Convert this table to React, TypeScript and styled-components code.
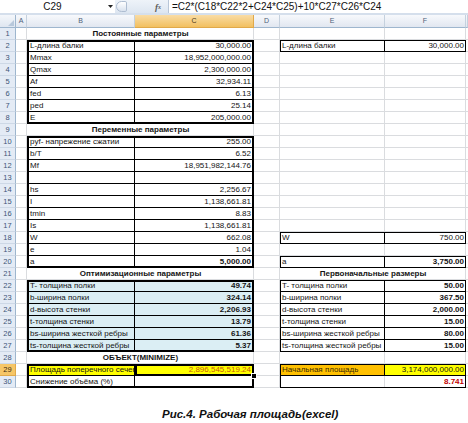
import React from 'react';
import styled, { createGlobalStyle } from 'styled-components';

const GlobalStyle = createGlobalStyle`
  html, body { margin: 0; padding: 0; background: #ffffff; }
  body { font-family: "Liberation Sans", Arial, sans-serif; }
`;

const Page = styled.div`
  width: 468px;
  height: 423px;
  overflow: hidden;
  background: #ffffff;
  display: flex;
  flex-direction: column;
`;

/* ---------- formula bar ---------- */
const FormulaBar = styled.div`
  display: flex;
  align-items: stretch;
  height: 15px;
  box-sizing: border-box;
  background: linear-gradient(#eef3f9, #dde6f1);
  border-bottom: 2px solid #d5dfec;
`;

const NameBox = styled.div`
  width: 105px;
  background: #ffffff;
  display: flex;
  align-items: center;
  justify-content: center;
  font-size: 10px;
  color: #111;
`;

const ArrowBox = styled.div`
  width: 10px;
  background: #ffffff;
  display: flex;
  align-items: center;
  justify-content: center;
`;

const Handle = styled.div`
  width: 11px;
  margin: 1px 0 1px 1px;
  box-sizing: border-box;
  border: 1px solid #aebdd1;
  border-radius: 6px 2px 2px 6px;
  background: linear-gradient(#ffffff, #d9e2ee);
`;

const FxBox = styled.div`
  width: 41px;
  display: flex;
  align-items: center;
  justify-content: flex-end;
  padding-right: 7px;
  box-sizing: border-box;
  font-family: "Liberation Serif", serif;
  font-style: italic;
  font-weight: bold;
  font-size: 9px;
  color: #5a5a5a;
  sub { font-size: 6px; vertical-align: -1px; }
`;

const FormulaInput = styled.div`
  flex: 1;
  background: #ffffff;
  border-left: 1px solid #b8c6d8;
  padding-left: 3px;
  font-size: 10px;
  line-height: 13px;
  color: #111;
  white-space: nowrap;
  overflow: hidden;
`;

/* ---------- sheet grid ---------- */
const Sheet = styled.div`
  display: grid;
  grid-template-columns: 16px 11px 108px 119px 26px 105px 81px 2px;
  grid-template-rows: 13px repeat(30, 12px);
`;

const Corner = styled.div`
  position: relative;
  box-sizing: border-box;
  background: linear-gradient(#f4f7fb, #dfe6f0);
  border-right: 1px solid #9eb6ce;
  border-bottom: 1px solid #9eb6ce;
  &::after {
    content: '';
    position: absolute;
    right: 1px;
    bottom: 1px;
    border-left: 6px solid transparent;
    border-bottom: 6px solid #b8c8db;
  }
`;

const ColHead = styled.div<{ $active?: boolean }>`
  box-sizing: border-box;
  background: ${p => (p.$active ? 'linear-gradient(#f9dca5, #f2c060)' : 'linear-gradient(#f7f9fc, #e1e7f0)')};
  border-right: 1px solid ${p => (p.$active ? '#e0a94a' : '#c5d1de')};
  border-bottom: 1px solid ${p => (p.$active ? '#e0a94a' : '#9eb6ce')};
  font-size: 7px;
  line-height: 12px;
  text-align: center;
  color: ${p => (p.$active ? '#4a3a1a' : '#4f6078')};
`;

const RowHead = styled.div<{ $active?: boolean }>`
  box-sizing: border-box;
  background: ${p => (p.$active ? '#f6c667' : '#e4ebf5')};
  border-right: 1px solid ${p => (p.$active ? '#e0a94a' : '#9eb6ce')};
  border-bottom: 1px solid ${p => (p.$active ? '#e0a94a' : '#cdd8e6')};
  font-size: 7.5px;
  line-height: 11px;
  text-align: center;
  color: ${p => (p.$active ? '#3a2a10' : '#3d5578')};
`;

type CellProps = {
  $span: number;
  $align: 'left' | 'right' | 'center';
  $bold?: boolean;
  $fill?: string;
  $color?: string;
  $t?: number;
  $r?: number;
  $b?: number;
  $l?: number;
  $active?: boolean;
};

const GRID = '#dadcdf';

const shadowOf = (p: CellProps) => {
  const s: string[] = [];
  if (p.$t) s.push(`inset 0 ${p.$t}px 0 #000`);
  s.push(p.$b ? `inset 0 -${p.$b}px 0 #000` : `inset 0 -1px 0 ${GRID}`);
  if (p.$l) s.push(`inset ${p.$l}px 0 0 #000`);
  s.push(p.$r ? `inset -${p.$r}px 0 0 #000` : `inset -1px 0 0 ${GRID}`);
  return s.join(', ');
};

const Cell = styled.div<CellProps>`
  position: relative;
  z-index: ${p => (p.$active ? 3 : 1)};
  grid-column: span ${p => p.$span};
  box-sizing: border-box;
  padding: 0 ${p => (p.$r && p.$r > 1 ? 3 : 2)}px 0 ${p => (p.$l && p.$l > 1 ? 3 : 2)}px;
  font-size: 8px;
  line-height: 12px;
  white-space: nowrap;
  overflow: ${p => (p.$active ? 'visible' : 'hidden')};
  text-align: ${p => p.$align};
  font-weight: ${p => (p.$bold ? 'bold' : 'normal')};
  background: ${p => p.$fill ?? 'transparent'};
  color: ${p => p.$color ?? '#141414'};
  box-shadow: ${p => shadowOf(p)};
`;

const FillHandle = styled.span`
  position: absolute;
  right: -3px;
  bottom: -3px;
  width: 4px;
  height: 4px;
  background: #000;
  border: 1px solid #fff;
`;

const Caption = styled.div`
  margin-top: 19px;
  padding-left: 162px;
  font-family: "Liberation Sans", Arial, sans-serif;
  font-style: italic;
  font-weight: bold;
  font-size: 11.5px;
  line-height: 14px;
  color: #111;
`;

/* ---------- data ---------- */
type Spec = {
  x?: string;
  s?: number;
  a?: 'left' | 'right' | 'center';
  w?: boolean;
  f?: string;
  c?: string;
  t?: number;
  r?: number;
  b?: number;
  l?: number;
  active?: boolean;
};
type RowSpec = Record<number, Spec>;

const BLUE = '#dbeef4';

const bc = (label: string, value: string, o: { first?: boolean; last?: boolean; bold?: boolean; fill?: string } = {}): RowSpec => {
  const t = o.first ? 2 : 0;
  const b = o.last ? 2 : 1;
  return {
    1: { x: label, a: 'left', l: 2, r: 1, t, b, f: o.fill },
    2: { x: value, a: 'right', r: 2, t, b, w: o.bold, f: o.fill },
  };
};

const ef = (label: string, value: string, o: { first?: boolean; bold?: boolean } = {}): RowSpec => {
  const t = o.first ? 1 : 0;
  return {
    4: { x: label, a: 'left', l: 1, r: 1, t, b: 1 },
    5: { x: value, a: 'right', r: 1, t, b: 1, w: o.bold },
  };
};

const title = (col: number, text: string): RowSpec => ({ [col]: { x: text, s: 2, a: 'center', w: true } });

const rows: RowSpec[] = [
  { ...title(1, 'Постоянные параметры') },
  { ...bc('L-длина балки', '30,000.00', { first: true }), ...ef('L-длина балки', '30,000.00', { first: true }) },
  bc('Mmax', '18,952,000,000.00'),
  bc('Qmax', '2,300,000.00'),
  bc('Af', '32,934.11'),
  bc('fed', '6.13'),
  bc('ped', '25.14'),
  bc('E', '205,000.00', { last: true }),
  { ...title(1, 'Переменные параметры') },
  bc('pyf- напрежение сжатии', '255.00', { first: true }),
  bc('b/T', '6.52'),
  bc('Mf', '18,951,982,144.76'),
  bc('', ''),
  bc('hs', '2,256.67'),
  bc('I', '1,138,661.81'),
  bc('tmin', '8.83'),
  bc('Is', '1,138,661.81'),
  { ...bc('W', '662.08'), ...ef('W', '750.00', { first: true }) },
  bc('e', '1.04'),
  { ...bc('a', '5,000.00', { last: true, bold: true }), ...ef('a', '3,750.00', { first: true, bold: true }) },
  { ...title(1, 'Оптимизационные параметры'), ...title(4, 'Первоначальные размеры') },
  { ...bc('T- толщина полки', '49.74', { first: true, bold: true, fill: BLUE }), ...ef('T- толщина полки', '50.00', { first: true, bold: true }) },
  { ...bc('b-ширина полки', '324.14', { bold: true, fill: BLUE }), ...ef('b-ширина полки', '367.50', { bold: true }) },
  { ...bc('d-высота стенки', '2,206.93', { bold: true, fill: BLUE }), ...ef('d-высота стенки', '2,000.00', { bold: true }) },
  { ...bc('t-толщина стенки', '13.79', { bold: true, fill: BLUE }), ...ef('t-толщина стенки', '15.00', { bold: true }) },
  { ...bc('bs-ширина жесткой ребры', '61.36', { bold: true, fill: BLUE }), ...ef('bs-ширина жесткой ребры', '80.00', { bold: true }) },
  { ...bc('ts-толщина жесткой ребры', '5.37', { last: true, bold: true, fill: BLUE }), ...ef('ts-толщина жесткой ребры', '15.00', { bold: true }) },
  { ...title(1, 'ОБЪЕКТ(MINIMIZE)') },
  {
    1: { x: 'Площадь поперечного сечения', a: 'left', f: '#ffff00', l: 2, t: 2, r: 1, b: 1 },
    2: { x: '2,896,545,519.24', a: 'right', f: '#ffff00', c: '#c8590c', t: 2, r: 2, b: 2, l: 2, active: true },
    4: { x: 'Начальная площадь', a: 'left', f: '#ffc000', c: '#3a2a00', t: 1, l: 1, r: 1, b: 1 },
    5: { x: '3,174,000,000.00', a: 'right', f: '#ffff00', t: 1, r: 1, b: 1 },
  },
  {
    1: { x: 'Снижение объёма (%)', a: 'left', l: 2, b: 2, r: 1 },
    2: { r: 2, b: 2 },
    4: { l: 1, b: 1 },
    5: { x: '8.741', a: 'right', w: true, c: '#c00000', r: 1, b: 1 },
  },
];

const COLS = ['A', 'B', 'C', 'D', 'E', 'F', ''];

const renderRow = (spec: RowSpec, i: number) => {
  const out: React.ReactNode[] = [];
  const n = i + 1;
  out.push(
    <RowHead key={`h${n}`} $active={n === 29}>
      {n}
    </RowHead>
  );
  let col = 0;
  while (col < COLS.length) {
    const c = spec[col] ?? {};
    const span = c.s ?? 1;
    out.push(
      <Cell
        key={`c${n}-${col}`}
        $span={span}
        $align={c.a ?? 'left'}
        $bold={c.w}
        $fill={c.f}
        $color={c.c}
        $t={c.t}
        $r={c.r}
        $b={c.b}
        $l={c.l}
        $active={c.active}
      >
        {c.x}
        {c.active && <FillHandle />}
      </Cell>
    );
    col += span;
  }
  return out;
};

export default function App() {
  return (
    <Page>
      <GlobalStyle />
      <FormulaBar>
        <NameBox>C29</NameBox>
        <ArrowBox>
          <svg width="5" height="3" viewBox="0 0 5 3">
            <path d="M0 0 H5 L2.5 3 Z" fill="#222" />
          </svg>
        </ArrowBox>
        <Handle />
        <FxBox>
          f<sub>x</sub>
        </FxBox>
        <FormulaInput>=C2*(C18*C22*2+C24*C25)+10*C27*C26*C24</FormulaInput>
      </FormulaBar>
      <Sheet>
        <Corner />
        {COLS.map(c => (
          <ColHead key={`col${c || 'G'}`} $active={c === 'C'}>
            {c}
          </ColHead>
        ))}
        {rows.map((r, i) => renderRow(r, i))}
      </Sheet>
      <Caption>Рис.4. Рабочая площадь(excel)</Caption>
    </Page>
  );
}
